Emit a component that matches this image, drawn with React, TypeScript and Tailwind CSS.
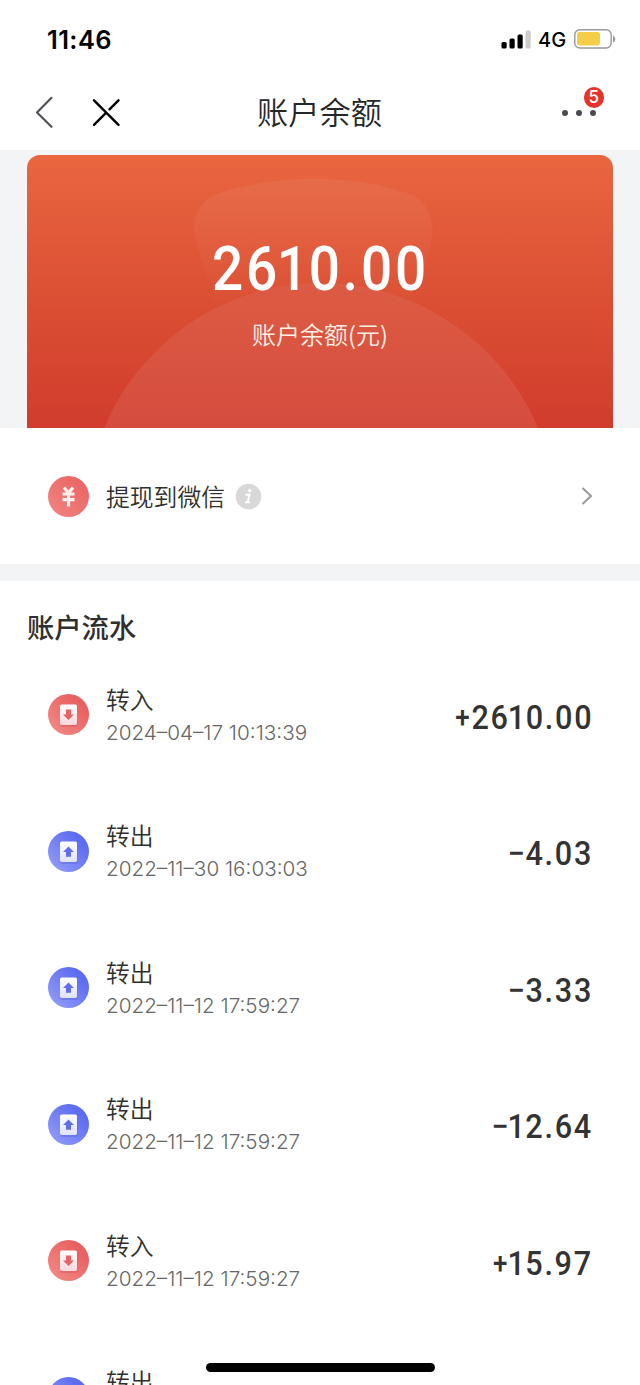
const CJK = "font-['Noto_Sans_CJK_SC',sans-serif]";

type Entry = { kind: "in" | "out"; time: string; amount: string };

const entries: Entry[] = [
  { kind: "in", time: "2024–04–17 10:13:39", amount: "+2610.00" },
  { kind: "out", time: "2022–11–30 16:03:03", amount: "-4.03" },
  { kind: "out", time: "2022–11–12 17:59:27", amount: "-3.33" },
  { kind: "out", time: "2022–11–12 17:59:27", amount: "-12.64" },
  { kind: "in", time: "2022–11–12 17:59:27", amount: "+15.97" },
  { kind: "out", time: "", amount: "" },
];

/* The numeral 1 is set narrower than the other figures. */
function Figures({ value }: { value: string }) {
  return (
    <>
      {value.split(/([1+-])/).map((part, i) => {
        if (part === "1") return <span key={i} className="-ml-[0.06em] -mr-[0.04em]">1</span>;
        if (part === "+") return <span key={i} className="relative -top-[2px] text-[0.85em]">+</span>;
        if (part === "-") return <span key={i} className="-mr-[0.03em]">−</span>;
        return <span key={i}>{part}</span>;
      })}
    </>
  );
}

function StatusBar() {
  return (
    <div className="flex h-[78px] items-center pl-[47px] pr-[24px]">
      <span className="pt-[1px] font-[Inter,sans-serif] text-[25.500px] leading-none font-semibold tracking-[0.400px] text-black">11:46</span>
      <div className="ml-auto flex items-center">
        <svg width="30" height="19" viewBox="0 0 30 19">
          <rect x="0.500" y="12" width="5.200" height="6.600" rx="1.600" fill="#000" />
          <rect x="8.500" y="8.500" width="5.200" height="10.100" rx="1.600" fill="#000" />
          <rect x="16.500" y="4.500" width="5.200" height="14.100" rx="1.600" fill="#000" />
          <rect x="24.500" y="0.500" width="5.200" height="18.100" rx="1.600" fill="#ccc" />
        </svg>
        <span className="ml-[7px] w-[28px] pt-[2px] font-[Inter,sans-serif] text-[20px] leading-none font-medium text-black">4G</span>
        <svg className="ml-[8px]" width="42" height="20" viewBox="0 0 42 20">
          <rect x="0.800" y="0.800" width="36.400" height="18.200" rx="5" fill="none" stroke="#999" strokeWidth="1.400" />
          <rect x="3" y="3" width="23" height="13.500" rx="2.800" fill="#f4ce46" />
          <path d="M39 6.500c3 1 3 6 0 7z" fill="#999" />
        </svg>
      </div>
    </div>
  );
}

function NavBar() {
  return (
    <div className="flex h-[72px] items-center pr-[39px] pb-[4px] pl-[34px]">
      <svg width="90" height="34" viewBox="0 0 90 34" fill="none" strokeLinecap="round">
        <path d="M17.500 2.800 3 17.500l14.500 14.300" stroke="#50525a" strokeWidth="2.200" strokeLinejoin="round" />
        <path d="M60 5.300l24.500 24.500M60 29.800l12-12M75.500 14.300l9-9" stroke="#000" strokeWidth="2.400" />
      </svg>
      <h1 className={`${CJK} -mt-[2px] w-[391px] text-center text-[31.200px] leading-none font-[350] text-[#26272b]`}>账户余额</h1>
      <div className="relative ml-auto flex h-[34px] w-[44px] items-center justify-center gap-[7.500px] pt-[2px]">
        <span className="size-[6.200px] rounded-full bg-[#4b4c51]" />
        <span className="size-[6.200px] rounded-full bg-[#4b4c51]" />
        <span className="size-[6.200px] rounded-full bg-[#4b4c51]" />
        <span className="absolute -top-[8px] left-[26.500px] flex size-[20.500px] items-center justify-center rounded-full bg-[#e5352b] font-[Inter,sans-serif] text-[17px] leading-none font-medium text-white">
          5
        </span>
      </div>
    </div>
  );
}

function BalanceCard() {
  return (
    <section className="h-[278px] bg-[#f3f4f6] px-[27px] pt-[5px]">
      <div className="relative h-[273px] overflow-hidden rounded-t-[13px] bg-linear-to-b from-[#e9663f] via-[#dc5034] to-[#d13c2d]">
        <svg className="absolute inset-0" width="586" height="273" viewBox="0 0 586 273">
          <defs>
            <linearGradient id="bag" x1="0" y1="0" x2="0" y2="1">
              <stop offset="0" stopColor="#fff" stopOpacity="0.060" />
              <stop offset="1" stopColor="#fff" stopOpacity="0.010" />
            </linearGradient>
          </defs>
          <path
            d="M188 151C181 124 171 100 167.500 78C165 60 176 43 193 38C252 19 322 19 380 38C398 44 407 62 405.500 80C401 104 392 128 386 151C326 121 248 121 188 151Z"
            fill="url(#bag)"
          />
          <path d="M77 273C112 189 196 128 293 128C390 128 476 188 511 273Z" fill="#df7468" fillOpacity="0.300" />
        </svg>
        <div className="relative flex flex-col items-center text-white">
          <div className="mt-[78px] h-[72px] origin-center scale-x-[0.9] pl-[2px] font-[Roboto,sans-serif] text-[61px] leading-[72px] font-[480] tracking-[3.200px] whitespace-nowrap">
            <Figures value="2610.00" />
          </div>
          <div className={`${CJK} mt-[14px] text-[24px] leading-[30px] font-[350] text-[#fff0e8]`}>账户余额(元)</div>
        </div>
      </div>
    </section>
  );
}

function YuanIcon() {
  return (
    <svg width="41" height="41" viewBox="0 0 41 41" className="shrink-0">
      <defs>
        <linearGradient id="yuan" x1="1" y1="0" x2="0" y2="1">
          <stop offset="0" stopColor="#e9605f" />
          <stop offset="1" stopColor="#f18684" />
        </linearGradient>
      </defs>
      <circle cx="20.500" cy="20.500" r="20.500" fill="url(#yuan)" />
      <path d="M16 11.500l4.500 5.500 4.500-5.500M14.500 18h12M14.500 23.700h12M20.500 17v13.500" fill="none" stroke="#fff0ef" strokeWidth="3.200" />
    </svg>
  );
}

function TransferIcon({ kind }: { kind: "in" | "out" }) {
  const incoming = kind === "in";
  return (
    <svg width="41" height="41" viewBox="0 0 41 41" className="shrink-0">
      <defs>
        <linearGradient id={`disc-${kind}`} x1="1" y1="0" x2="0" y2="1">
          <stop offset="0.200" stopColor={incoming ? "#e96060" : "#5c6bf1"} />
          <stop offset="1" stopColor={incoming ? "#f28d8a" : "#98a1f8"} />
        </linearGradient>
        <linearGradient id={`sheet-${kind}`} x1="0" y1="0" x2="0" y2="1">
          <stop offset="0" stopColor="#fff" />
          <stop offset="1" stopColor={incoming ? "#fbd7db" : "#dfe2fc"} />
        </linearGradient>
      </defs>
      <circle cx="20.500" cy="20.500" r="20.500" fill={`url(#disc-${kind})`} />
      <rect x="12.500" y="12" width="17" height="21" rx="2" fill={incoming ? "#c93b48" : "#3e4bd0"} fillOpacity="0.250" />
      <rect x="12" y="10.500" width="17" height="20.500" rx="1.800" fill={`url(#sheet-${kind})`} />
      {incoming ? (
        <path d="M18 15.500h5v5h3l-5.500 5.500-5.500-5.500h3z" fill="#e56267" />
      ) : (
        <path d="M20.500 15.500l5.500 5.500h-3v4.800h-5V21h-3z" fill="#626de9" />
      )}
    </svg>
  );
}

function WithdrawRow() {
  return (
    <div className="flex h-[136px] items-center pr-[47px] pl-[48px]">
      <YuanIcon />
      <span className={`${CJK} ml-[17px] text-[23.800px] leading-none font-[350] text-[#2f2f2f]`}>提现到微信</span>
      <svg className="ml-[10px]" width="27" height="27" viewBox="0 0 27 27">
        <circle cx="13.500" cy="13.500" r="12.800" fill="#d8d8d8" />
        <circle cx="14.700" cy="7.500" r="1.800" fill="#fff" />
        <path d="M10.500 11.800h4l-2 7.400h2.500M10 19.200h2.700" fill="none" stroke="#fff" strokeWidth="1.900" />
      </svg>
      <svg className="ml-auto" width="12" height="20" viewBox="0 0 12 20" fill="none">
        <path d="M1.500 2l8.500 8-8.500 8" stroke="#999" strokeWidth="2" />
      </svg>
    </div>
  );
}

function EntryRow({ kind, time, amount }: Entry) {
  return (
    <li className="flex h-[136.500px] items-center pr-[47px] pl-[48px]">
      <TransferIcon kind={kind} />
      <div className="ml-[17px] flex h-[68px] flex-col pt-[1px]">
        <span className={`${CJK} text-[23.800px] leading-[33px] font-[350] text-[#2f2f2f]`}>{kind === "in" ? "转入" : "转出"}</span>
        {time && (
          <span className="pt-[1px] font-[Inter,sans-serif] text-[20.700px] leading-[33px] font-[350] whitespace-nowrap text-[#666]">{time}</span>
        )}
      </div>
      {amount && (
        <span className="ml-auto origin-right scale-x-[0.9] pt-[4px] font-[Roboto,sans-serif] text-[34px] leading-none font-medium tracking-[1.900px] whitespace-nowrap text-[#333]">
          <Figures value={amount} />
        </span>
      )}
    </li>
  );
}

export default function App() {
  return (
    <main className="relative h-[1385px] w-[640px] overflow-hidden bg-white">
      <StatusBar />
      <NavBar />
      <BalanceCard />
      <WithdrawRow />
      <div className="h-[17px] bg-[#f3f4f6]" />
      <h2 className={`${CJK} flex h-[65.500px] items-end pb-[6px] pl-[27px] text-[27.300px] leading-[30px] font-medium text-[#2f2f2f]`}>账户流水</h2>
      <ul>
        {entries.map((entry, i) => (
          <EntryRow key={i} {...entry} />
        ))}
      </ul>
      <div className="absolute bottom-[13.500px] left-[206px] h-[9px] w-[229px] rounded-full bg-black" />
    </main>
  );
}
